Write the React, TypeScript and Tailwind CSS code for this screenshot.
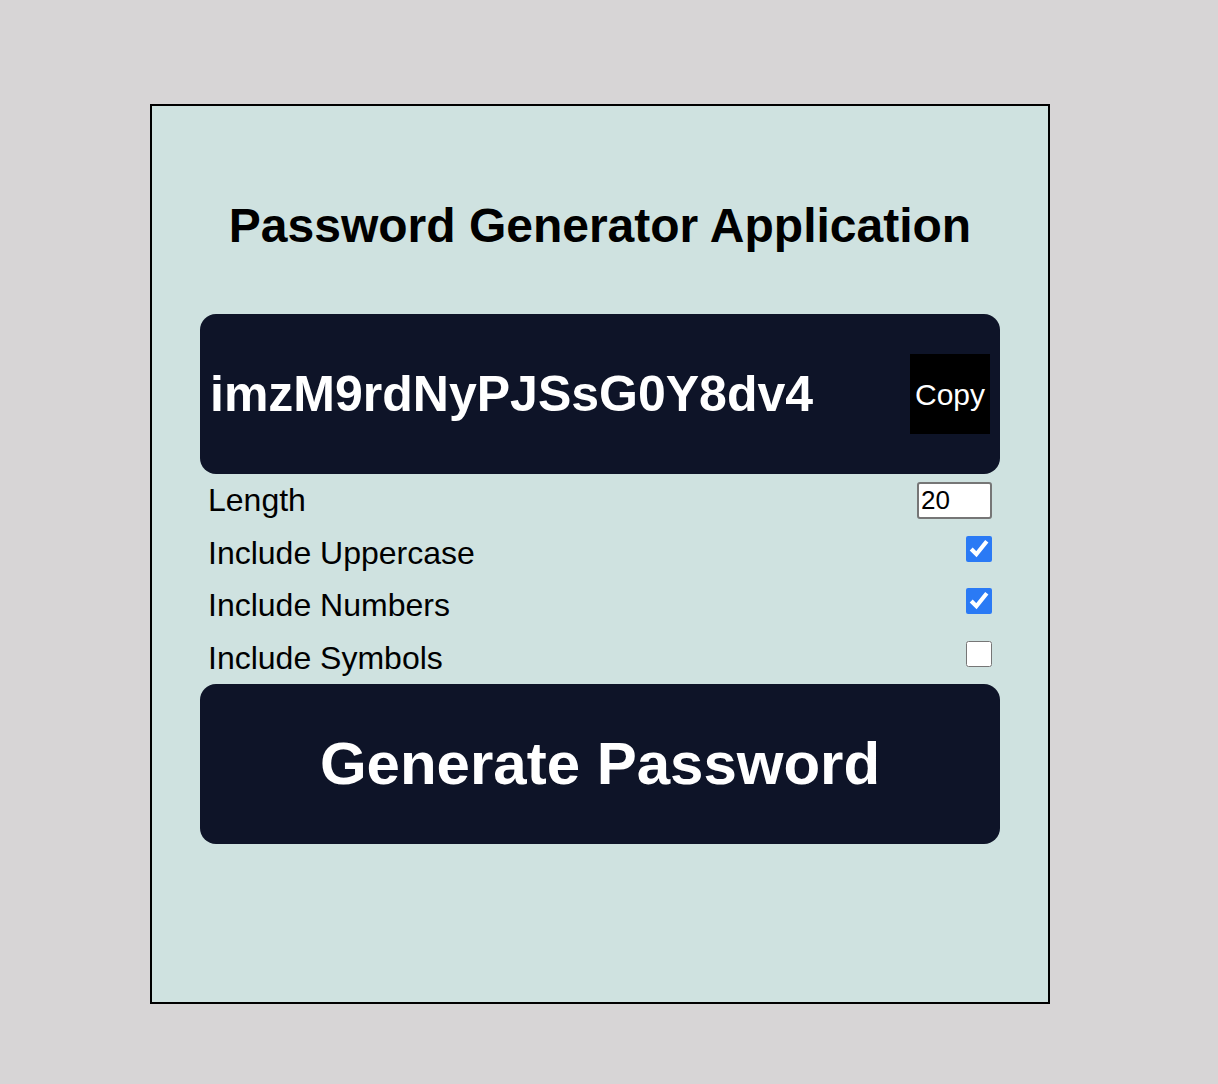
import { useState } from 'react';

function OptionRow(props: { label: string; children: React.ReactNode }) {
  return (
    <div className="flex items-center justify-between h-[52.5px] px-2">
      <span className="text-[32px] leading-none text-black">{props.label}</span>
      {props.children}
    </div>
  );
}

export default function App() {
  const [length, setLength] = useState('20');
  const [upper, setUpper] = useState(true);
  const [numbers, setNumbers] = useState(true);
  const [symbols, setSymbols] = useState(false);

  return (
    <div
      className="min-h-[1084px] bg-[#d7d5d6] pt-[104px] pl-[150px]"
      style={{ fontFamily: '"Liberation Sans", Arial, sans-serif' }}
    >
      <div className="w-[900px] h-[900px] border-2 border-black bg-[#cfe2e0] px-[48px] pt-[92px]">
        <h1 className="text-center text-[48px] font-bold leading-[56px] text-black">
          Password Generator Application
        </h1>

        <div className="mt-[60px] h-[160px] rounded-2xl bg-[#0e1428] flex items-center justify-between px-[10px]">
          <span className="text-[50px] font-bold text-white">imzM9rdNyPJSsG0Y8dv4</span>
          <button className="w-[80px] h-[80px] bg-black text-white text-[30px]">Copy</button>
        </div>

        <div>
          <OptionRow label="Length">
            <input
              type="text"
              value={length}
              onChange={(e) => setLength(e.target.value)}
              className="w-[75px] h-[37px] border-2 border-[#767676] rounded-[3px] bg-white text-[26px] px-[2px] leading-none text-black"
            />
          </OptionRow>
          <OptionRow label="Include Uppercase">
            <input
              type="checkbox"
              checked={upper}
              onChange={() => setUpper(!upper)}
              className="w-[26px] h-[26px] accent-[#2a7af5] -mt-2"
            />
          </OptionRow>
          <OptionRow label="Include Numbers">
            <input
              type="checkbox"
              checked={numbers}
              onChange={() => setNumbers(!numbers)}
              className="w-[26px] h-[26px] accent-[#2a7af5] -mt-2"
            />
          </OptionRow>
          <OptionRow label="Include Symbols">
            <input
              type="checkbox"
              checked={symbols}
              onChange={() => setSymbols(!symbols)}
              className="w-[26px] h-[26px] accent-[#2a7af5] -mt-2"
            />
          </OptionRow>
        </div>

        <button className="w-full h-[160px] rounded-2xl bg-[#0e1428] text-white text-[60px] font-bold">
          Generate Password
        </button>
      </div>
    </div>
  );
}
